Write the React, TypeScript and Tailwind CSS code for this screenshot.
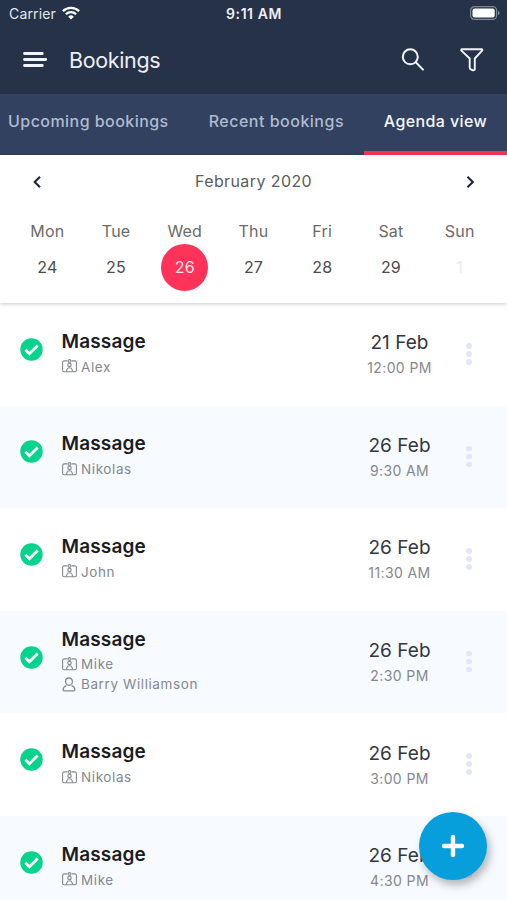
import React from 'react';

interface Booking {
    id: number;
    service: string;
    staff: string;
    customer?: string;
    date: string;
    time: string;
}

const bookings: Booking[] = [
    { id: 1, service: 'Massage', staff: 'Alex', date: '21 Feb', time: '12:00 PM' },
    { id: 2, service: 'Massage', staff: 'Nikolas', date: '26 Feb', time: '9:30 AM' },
    { id: 3, service: 'Massage', staff: 'John', date: '26 Feb', time: '11:30 AM' },
    { id: 4, service: 'Massage', staff: 'Mike', customer: 'Barry Williamson', date: '26 Feb', time: '2:30 PM' },
    { id: 5, service: 'Massage', staff: 'Nikolas', date: '26 Feb', time: '3:00 PM' },
    { id: 6, service: 'Massage', staff: 'Mike', date: '26 Feb', time: '4:30 PM' },
];

const days = [
    { name: 'Mon', date: 24 },
    { name: 'Tue', date: 25 },
    { name: 'Wed', date: 26, selected: true },
    { name: 'Thu', date: 27 },
    { name: 'Fri', date: 28 },
    { name: 'Sat', date: 29 },
    { name: 'Sun', date: 1, outside: true },
];

function StatusBar() {
    return (
        <div className="grid h-[27px] grid-cols-3 items-center pr-[7px] pl-[9px] text-[14px] text-[#e3e7ee]">
            <div className="flex items-center gap-[6px]">
                <span className="tracking-[0.15px]">Carrier</span>
                <svg className="mb-0.5" width="18" height="14" viewBox="0 0 18 14" fill="none" stroke="#fff" strokeWidth="2.3">
                    <path d="M0.9 5.1a11.6 11.6 0 0 1 16.2 0" />
                    <path d="M3.9 8.2a7.3 7.3 0 0 1 10.2 0" />
                    <path d="M9 13.6 6.2 10.7a4 4 0 0 1 5.6 0Z" fill="#fff" stroke="none" />
                </svg>
            </div>
            <span className="pr-px text-center font-semibold tracking-[0.55px] text-[#eef0f4]">9:11 AM</span>
            <svg className="mb-px justify-self-end" width="30" height="14" viewBox="0 0 30 14">
                <rect x="0.6" y="0.6" width="26" height="12.8" rx="3.8" fill="none" stroke="#7d8696" strokeWidth="1.2" />
                <rect x="2.5" y="2.5" width="22.2" height="9" rx="2" fill="#fff" />
                <path d="M28 5v4.2c1-.3 1.6-1.1 1.6-2.1S29 5.3 28 5Z" fill="#7d8696" />
            </svg>
        </div>
    );
}

function Header() {
    return (
        <div className="flex h-[67px] items-center px-[23px] pb-px">
            <svg className="mb-px" width="25" height="17" viewBox="0 0 25 17" stroke="#f1f4fa" strokeWidth="2.8" strokeLinecap="round">
                <path d="M1.5 2.5h17.800M1.5 8.500h21.200M1.5 14.500h17.800" />
            </svg>
            <h1 className="ml-[21px] text-[21.5px] leading-[30px] tracking-[-0.35px] text-[#eceff5]">Bookings</h1>
            <div className="ml-auto flex items-center gap-[35px]">
                <svg width="24" height="24" viewBox="0 0 24 24" fill="none" stroke="#f1f4fa" strokeWidth="2" strokeLinecap="round">
                    <circle cx="9.3" cy="8.8" r="7.5" />
                    <path d="m14.8 14.3 7.2 7.3" />
                </svg>
                <svg width="24" height="24" viewBox="0 0 24 24" fill="none" stroke="#f1f4fa" strokeWidth="1.9" strokeLinejoin="round">
                    <path d="M1.900 1.300h19.700c.8 0 1 .8.500 1.400L14.800 10.500v10.200c0 1.400-.7 1.900-1.800 1.600l-2-.8c-.9-.4-1.300-.9-1.300-1.800v-9.200L1.400 2.600c-.4-.6-.2-1.300.5-1.300Z" />
                </svg>
            </div>
        </div>
    );
}

function Tabs() {
    return (
        <div className="flex h-[60.5px] justify-between bg-[#32415f] text-[16px] font-medium tracking-[0.45px] whitespace-nowrap text-[#aebbcf]">
            <div className="flex items-center pb-[7px] pl-2">Upcoming bookings</div>
            <div className="flex items-center pb-[7px] pl-[20px] tracking-[0.5px]">Recent bookings</div>
            <div className="flex w-[143px] items-center justify-center border-b-4 border-[#fb3158] pb-[3px] tracking-[0.4px] text-[#f3f6fb]">Agenda view</div>
        </div>
    );
}

function Chevron({ left }: { left?: boolean }) {
    return (
        <svg width="9" height="14" viewBox="0 0 9 14" fill="none" stroke="#1f2638" strokeWidth="2.1">
            <path d={left ? 'M8 1.8 2.7 7l5.3 5.2' : 'M1.5 1.8 6.8 7l-5.3 5.2'} />
        </svg>
    );
}

function Calendar() {
    return (
        <div className="relative h-[148.5px] bg-white text-[16px] text-[#6b6b6b] shadow-[0_1px_4px_rgba(0,0,0,0.22)]">
            <div className="flex h-[54.5px] items-center justify-between px-[32px]">
                <Chevron left />
                <span className="pb-px tracking-[0.4px] text-[#5c5c5c]">February 2020</span>
                <Chevron />
            </div>
            <div className="grid grid-cols-7 px-[13px] pt-[10px]">
                {days.map((day) => (
                    <div key={day.name} className="flex flex-col items-center">
                        <span className="h-[25px] leading-6 tracking-[0.2px]">{day.name}</span>
                        <span
                            className={`flex size-[47px] items-center justify-center rounded-full pb-px tracking-[0.2px] ${
                                day.selected ? 'bg-[#fe3359] text-[#ffe3e8]' : day.outside ? 'text-[#e6e8fb]' : 'text-[#4b4b4b]'
                            }`}
                        >
                            {day.date}
                        </span>
                    </div>
                ))}
            </div>
        </div>
    );
}

function BadgeIcon() {
    return (
        <svg className="mb-px" width="15" height="14" viewBox="0 0 15 14" fill="none" stroke="#85888f" strokeWidth="1.1">
            <path d="M5.4 1.900H2.200C1.200 1.900.6 2.500.6 3.500v7.700c0 1 .6 1.600 1.600 1.600h10.600c1 0 1.600-.6 1.600-1.600V3.500c0-1-.6-1.600-1.600-1.600H9.600" />
            <circle cx="7.5" cy="2" r="1.4" />
            <circle cx="7.5" cy="5.9" r="1.7" />
            <path d="M4.300 12.700 5 10.400c.3-1 1.100-1.600 2.500-1.600s2.200.6 2.500 1.600l.7 2.300" />
        </svg>
    );
}

function PersonIcon() {
    return (
        <svg className="mb-px" width="15" height="15" viewBox="0 0 15 15" fill="none" stroke="#85888f" strokeWidth="1.3">
            <path d="M7 1C5 1 3.600 2.400 3.600 4.400S5 8.300 7 8.300s3.400-1.900 3.400-3.900S9 1 7 1Z" />
            <path d="M4.400 8.600c-2 .5-3.200 1.800-3.300 4.200 0 .7.400 1.100 1.100 1.100h9.600c.7 0 1.100-.4 1.100-1.100-.1-2.400-1.300-3.700-3.300-4.200" />
        </svg>
    );
}

function BookingRow({ booking }: { booking: Booking }) {
    return (
        <div className="flex h-[102.6px] items-center bg-white pl-[20px] even:bg-[#f7faff]">
            <svg className="mb-[10px]" width="23" height="23" viewBox="0 0 23 23">
                <circle cx="11.5" cy="11.5" r="11.2" fill="#06d38c" />
                <path d="m5.400 11.700 4 4 8.200-8.200" fill="none" stroke="#fff" strokeWidth="2.8" />
            </svg>
            <div className="ml-[18.5px] flex-1 pb-[3px]">
                <div className="mb-[2px] text-[19px] leading-[26px] font-semibold tracking-[0.15px] text-[#1c1c1f]">{booking.service}</div>
                <div className="flex h-5 items-center gap-[4.5px] text-[13.5px] tracking-[0.6px] text-[#85888f]">
                    <BadgeIcon />
                    {booking.staff}
                </div>
                {booking.customer && (
                    <div className="flex h-5 items-center gap-[4.5px] text-[13.5px] tracking-[0.6px] text-[#85888f]">
                        <PersonIcon />
                        {booking.customer}
                    </div>
                )}
            </div>
            <div className="w-[90px] text-center">
                <div className="mb-[2px] text-[19px] leading-[26px] tracking-[0.05px] text-[#303642]">{booking.date}</div>
                <div className="text-[14px] leading-5 tracking-[0.4px] text-[#85888f]">{booking.time}</div>
            </div>
            <div className="mr-[35.5px] ml-[21.5px] flex flex-col gap-[2.5px] pb-px">
                <span className="size-[5.5px] rounded-full bg-[#e4e5fb]" />
                <span className="size-[5.5px] rounded-full bg-[#e4e5fb]" />
                <span className="size-[5.5px] rounded-full bg-[#e4e5fb]" />
            </div>
        </div>
    );
}

export default function App() {
    return (
        <div className="relative flex h-[900px] w-[507px] flex-col overflow-hidden bg-white font-['Inter','Liberation_Sans',sans-serif]">
            <div className="shrink-0 bg-[#263248]">
                <StatusBar />
                <Header />
            </div>
            <div className="shrink-0">
                <Tabs />
                <Calendar />
            </div>

            <div className="shrink-0">
                {bookings.map((booking) => (
                    <BookingRow key={booking.id} booking={booking} />
                ))}
            </div>

            {/* Add booking */}
            <button
                type="button"
                aria-label="Add booking"
                className="absolute right-[20px] bottom-[20px] flex size-[68px] items-center justify-center rounded-full bg-[#069edb] shadow-[3px_5px_8px_rgba(0,0,0,0.28)]"
            >
                <svg width="24" height="24" viewBox="0 0 24 24" stroke="#fff" strokeWidth="4.400" strokeLinecap="round">
                    <path d="M12 3v18M3 12h18" />
                </svg>
            </button>
        </div>
    );
}
